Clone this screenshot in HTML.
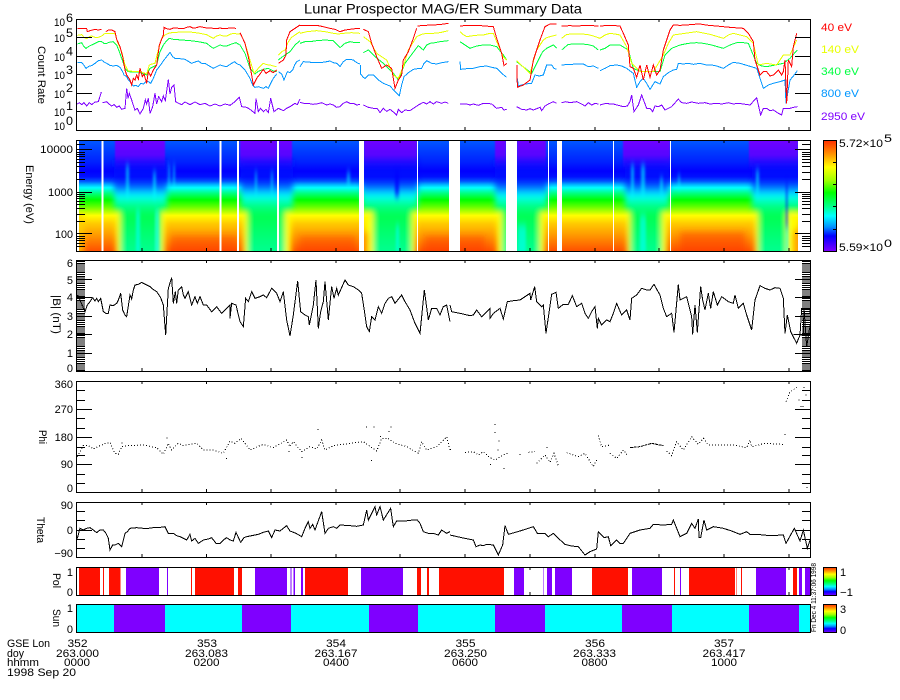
<!DOCTYPE html>
<html>
<head>
<meta charset="utf-8">
<style>
html,body{margin:0;padding:0;background:#fff;}
svg{display:block;}
text{font-family:"Liberation Sans",sans-serif;font-size:11px;fill:#000;}
.l{fill:none;stroke-width:3;stroke-linejoin:miter;shape-rendering:crispEdges;}
.k{stroke:#000;}
.ax{fill:none;stroke:#000;stroke-width:1;shape-rendering:crispEdges;}
.r{stroke:#ff0000;}.y{stroke:#e8ff00;}.g{stroke:#00ff40;}.b{stroke:#0096ff;}.p{stroke:#7f00ff;}
</style>
</head>
<body>
<svg width="900" height="700" viewBox="0 0 900 700" xmlns="http://www.w3.org/2000/svg">
<defs>
<linearGradient id="day" gradientUnits="userSpaceOnUse" x1="0" y1="140" x2="0" y2="251">
<stop offset="0" stop-color="#0058ff"/><stop offset=".2" stop-color="#0020ff"/><stop offset=".28" stop-color="#0000ff"/><stop offset=".33" stop-color="#0010ff"/><stop offset=".37" stop-color="#0050ff"/><stop offset=".4" stop-color="#00b0ff"/><stop offset=".43" stop-color="#00ffff"/><stop offset=".48" stop-color="#00ff80"/><stop offset=".54" stop-color="#00ff00"/><stop offset=".6" stop-color="#60ff00"/><stop offset=".65" stop-color="#c0ff00"/><stop offset=".68" stop-color="#ffff00"/><stop offset=".75" stop-color="#ffcc00"/><stop offset=".85" stop-color="#ff9c00"/><stop offset="1" stop-color="#ff5000"/>
</linearGradient>
<linearGradient id="wake" gradientUnits="userSpaceOnUse" x1="0" y1="140" x2="0" y2="251">
<stop offset="0" stop-color="#0030ff"/><stop offset=".25" stop-color="#0010ff"/><stop offset=".32" stop-color="#0000ff"/><stop offset=".38" stop-color="#0020ff"/><stop offset=".45" stop-color="#0090ff"/><stop offset=".5" stop-color="#00ffff"/><stop offset=".58" stop-color="#00ff90"/><stop offset=".68" stop-color="#00ff50"/><stop offset="1" stop-color="#00ff90"/>
</linearGradient>
<linearGradient id="pt" gradientUnits="userSpaceOnUse" x1="0" y1="140" x2="0" y2="174">
<stop offset="0" stop-color="#7000ff"/><stop offset=".45" stop-color="#6000ff" stop-opacity=".9"/><stop offset="1" stop-color="#0000ff" stop-opacity="0"/>
</linearGradient>
<filter id="bl" filterUnits="userSpaceOnUse" x="0" y="100" width="900" height="200"><feGaussianBlur stdDeviation="3 3.5"/></filter>
<filter id="bs" filterUnits="userSpaceOnUse" x="0" y="100" width="900" height="200"><feGaussianBlur stdDeviation="1.2 4"/></filter>
<filter id="bp" filterUnits="userSpaceOnUse" x="0" y="100" width="900" height="200"><feGaussianBlur stdDeviation=".7 0"/></filter>
<linearGradient id="cb" x1="0" y1="0" x2="0" y2="1">
<stop offset="0" stop-color="#ff3000"/><stop offset=".12" stop-color="#ff9000"/><stop offset=".24" stop-color="#ffff00"/><stop offset=".36" stop-color="#a0ff00"/><stop offset=".47" stop-color="#00ff00"/><stop offset=".6" stop-color="#00ff90"/><stop offset=".68" stop-color="#00ffff"/><stop offset=".78" stop-color="#0090ff"/><stop offset=".86" stop-color="#0000ff"/><stop offset="1" stop-color="#7f00ff"/>
</linearGradient>
<path id="xt" d="M142,0v3M206.5,0v3M271,0v3M336,0v3M400,0v3M465,0v3M530,0v3M595,0v3M659,0v3M724,0v3M789,0v3" class="ax"/>
<path id="xb" d="M142,0v-3M206.5,0v-3M271,0v-3M336,0v-3M400,0v-3M465,0v-3M530,0v-3M595,0v-3M659,0v-3M724,0v-3M789,0v-3" class="ax"/>
</defs>

<!-- title -->
<text x="304" y="13.5" textLength="278" lengthAdjust="spacingAndGlyphs" style="font-size:14px">Lunar Prospector MAG/ER Summary Data</text>

<!-- PANEL 1 lines -->
<g transform="scale(.33333)">
<polyline class="l p" points="232,312 238,308 245,314 252,308 260,318 268,308 275,314 285,306 295,305 304,276"/>
<polyline class="l p" points="308,308 320,305 327,312 335,318 342,314 350,322 358,318 365,328 375,325 380,265 384,295 388,280 395,300 400,316 405,330 412,325 420,342 430,325 436,300 440,312 445,295 450,340 458,320 465,280 470,312 476,290 485,305 490,288 496,302 505,238 510,282 515,262 522,255 527,305 536,310 545,314 555,306 570,314 585,306 600,314 615,310 630,318 645,312 660,318 675,312 690,316 705,305 718,292 725,320 740,322 750,328 765,340 768,295 775,335 782,325 790,335 798,328 805,338 812,295 822,335 835,325 850,332 860,325 870,320 885,310 892,314 900,297"/>
<polyline class="l b" points="232,188 245,188 252,196 258,205 268,198 275,197 285,190 295,182 305,180 312,186 320,190 330,196 340,198 350,196 360,202 368,215 372,225 380,230 385,240 390,245 400,258 408,256 415,260 422,250 430,252 438,244 445,245 452,250 460,235 470,210 478,200 485,190 492,180 500,170 510,157 518,170 525,175 540,176 555,178 565,184 575,190 585,186 595,183 605,190 615,190 628,198 640,205 650,200 660,195 670,198 680,200 692,192 703,185 712,192 720,195 735,210 750,235 758,255 765,262 775,260 790,265 798,260 805,265 812,250 820,235 830,222"/>
<polyline class="l b" points="835,215 845,222 852,240 862,215 870,218 878,210 884,195 890,185 900,180"/>
<polyline class="l g" points="232,132 245,128 252,140 258,145 268,138 275,135 285,130 295,125 305,125 312,130 320,130 330,126 340,125 350,135 358,155 365,175 375,205 385,215 400,216 420,217 430,222 440,225 450,205 460,200 470,195 480,155 490,135 500,122 508,115 520,118 530,118 540,120 560,121 580,123 600,126 620,130 630,138 640,145 650,140 660,135 670,138 680,138 695,132 708,128 720,135 735,160 750,205 765,222 775,214 785,210 795,207 805,205 818,212 830,215"/>
<polyline class="l g" points="835,180 845,172 855,165 870,155 885,135 900,122"/>
<polyline class="l y" points="232,106 245,104 252,112 260,116 268,110 275,108 285,112 295,112 305,108 315,100 330,100 345,100 352,125 365,155 375,195 385,213 400,214 420,215 430,218 440,222 448,195 456,192 465,190 475,150 485,115 495,105 505,100 515,98 530,97 540,96 560,96 580,97 600,100 620,104 630,110 640,115 650,108 660,105 670,108 680,108 690,103 700,100 712,102 722,102 735,130 750,180 762,220 775,205 782,198 790,190 800,194 810,195 820,198 830,200"/>
<polyline class="l y" points="835,165 845,155 855,150 865,125 875,112 885,105 900,95"/>
<polyline class="l r" points="232,86 245,86 260,86 262,95 270,92 285,88 295,90 305,88"/>
<polyline class="l r" points="318,95 325,90 335,90 345,95 350,118 360,140 368,170 375,210 380,225 385,232 390,240 395,255 400,235 405,240 410,225 415,238 420,205 427,230 432,222 440,250 445,215 452,228 460,210 470,195 478,135 490,105 492,82 500,86 510,88 520,84 530,84 540,86 550,86 560,82 570,80 578,84 585,84 600,80 610,82 620,84 630,84 640,85 650,86 660,84 670,86 680,85 695,84 708,85"/>
<polyline class="l r" points="720,98 735,130 745,170 755,225 760,255 770,235 780,222 790,208 798,220 810,212 820,218 830,210"/>
<polyline class="l r" points="835,190 850,180 858,165 860,120 870,95 885,85 900,75"/>
</g>
<g transform="translate(300,0) scale(.33333)">
<polyline class="l p" points="0,307 12,310 25,310 38,313 50,312 65,308 80,315 90,312 100,315 110,322 120,320 130,310 140,305 150,310 160,310 170,315 180,313"/>
<polyline class="l p" points="190,315 205,322 220,325 232,326 240,338 250,325 260,334 270,328 280,336 290,345 295,328 305,338 315,330 330,332 340,325 355,315 370,307 380,312 390,305 400,312 410,305 425,310 435,306 445,310"/>
<polyline class="l p" points="480,312 500,312 510,315 520,312 535,316 550,310 560,310 575,312 590,325 605,322 612,330 620,328"/>
<polyline class="l p" points="650,320 665,328 680,330 690,326 700,330 720,322 725,332 735,318 745,312 760,305 770,310"/>
<polyline class="l p" points="785,308 797,305 810,308 830,305 845,312 855,318 865,308 875,315 885,310 895,312"/>
<polyline class="l b" points="0,200 10,185 25,186 40,188 60,188 75,186 90,183 100,188 110,190 120,200 130,185 140,178 150,178 160,180 170,188 180,192"/>
<polyline class="l b" points="181,195 182,222 190,232 195,235 205,225 220,225 235,240 250,250 270,258 285,275 298,287 305,255 312,230 325,218 340,208 352,206 365,205 372,190 380,182 395,190 410,192 425,188 445,185"/>
<polyline class="l b" points="480,185 482,208 500,206 520,205 540,200 560,198 575,202 590,205 605,220 620,232"/>
<polyline class="l b" points="652,235 655,258 675,252 695,250 705,225 718,228 730,225 740,195 755,195 762,205 770,208"/>
<polyline class="l b" points="785,195 810,193 850,192 865,200 880,198 895,205"/>
<polyline class="l g" points="0,130 15,125 30,125 50,122 75,120 100,122 110,132 120,143 135,130 150,125 165,128 180,128"/>
<polyline class="l g" points="190,158 205,150 225,170 250,190 280,220 295,240 315,190 345,150 355,137 370,150 380,135 390,130 405,128 420,125 445,122"/>
<polyline class="l g" points="480,125 495,135 510,145 530,138 550,135 570,135 590,140 610,165 620,180"/>
<polyline class="l g" points="650,185 695,220 715,180 728,155 740,145 750,140 760,135 770,145"/>
<polyline class="l g" points="785,150 805,133 830,132 860,133 880,138 895,150"/>
<polyline class="l y" points="0,100 20,95 50,92 75,95 100,100 115,102 130,100 155,98 180,100"/>
<polyline class="l y" points="190,110 210,125 230,160 260,180 280,225 295,235 310,200 325,150 350,110 365,103 380,100 400,100 420,98 445,92"/>
<polyline class="l y" points="480,95 490,104 500,110 525,106 550,105 570,100 580,100 590,125 610,170 620,180"/>
<polyline class="l y" points="650,182 690,220 710,150 730,120 740,113 750,110 770,105"/>
<polyline class="l y" points="785,115 800,103 830,102 860,103 880,108 900,115"/>
<polyline class="l r" points="0,77 25,76 50,76 70,80 90,85 105,88 120,95 135,90 150,88 165,86 180,85"/>
<polyline class="l r" points="190,88 205,95 215,130 230,170 245,205 260,195 275,205 285,265 295,240 305,225 310,180 325,155 340,115 350,85"/>
<polyline class="l r" points="352,78 375,76 400,75 425,73 445,70"/>
<polyline class="l r" points="480,78 505,76 530,76 555,78 580,80 590,115 605,160 612,197 620,190"/>
<polyline class="l r" points="651,195 652,262 670,255 690,240 700,180 720,120 735,80 750,72 770,72"/>
<polyline class="l r" points="785,78 810,77 830,78 860,76 895,78"/>
</g>
<g transform="translate(600,0) scale(.33333)">
<polyline class="l p" points="0,315 10,312 20,310 30,312 40,312 55,316 70,320 82,318 90,305 95,285 102,335 115,315 125,285 140,325 150,325 158,335 165,318 175,320 185,315 195,330 215,320 235,297 245,308 260,310 275,306 295,310 315,308 330,312 350,310 365,312 385,308 400,312 415,310 430,312 450,315 470,293 482,345 490,325 500,325 510,332 520,330 535,340 545,345 550,325 570,325 580,322 592,320"/>
<polyline class="l b" points="0,212 15,205 30,197 50,195 65,198 80,205 100,220 110,262 120,245 130,235 140,250 150,268 165,245 180,252 190,230 205,218 220,210 230,208 235,190 250,192 265,190 280,193 300,190 320,195 335,195 350,198 370,205 385,195 400,187 420,190 440,196 470,205 490,265 505,255 520,250 540,245 555,240 558,310 570,240 580,228 592,212"/>
<polyline class="l g" points="0,150 15,145 30,135 45,135 60,135 85,150 100,205 115,212 130,215 155,215 180,215 195,165 215,145 240,135 265,130 290,128 310,130 335,135 370,145 390,135 410,128 430,128 445,130 470,190 485,198 500,200 525,195 550,190 570,175 592,150"/>
<polyline class="l y" points="0,115 15,105 30,100 45,102 60,105 80,140 95,190 120,215 140,214 160,215 190,165 205,130 220,105 255,100 290,95 330,103 370,115 385,105 400,100 420,105 440,110 460,130 475,195 500,190 530,195 550,165 570,165 590,120"/>
<polyline class="l r" points="0,78 30,76 60,78 70,100 85,135 90,200 100,205 110,232 120,195 130,240 140,195 150,232 160,195 170,225 180,210 190,150 210,90 220,75 240,76 260,75 280,73 300,72 325,76 350,78 390,82 430,85 445,100 460,125 465,180 480,225 490,215 500,215 510,228 520,225 535,210 545,225 550,215 555,180 560,310 565,180 575,200 580,140 590,100"/>
</g>

<!-- PANEL 2 spectrogram -->
<svg x="79" y="140" width="719" height="111" viewBox="79 140 719 111">
<rect x="79" y="140" width="719" height="112" fill="url(#day)"/>
<g filter="url(#bl)">
<!-- left yellow edge and redder day -->
<rect x="70" y="214" width="14" height="42" fill="#ffd400" opacity=".7"/>
<rect x="172" y="236" width="65" height="22" fill="#ff3000" opacity=".35"/>
<rect x="300" y="236" width="55" height="22" fill="#ff3000" opacity=".35"/>
<rect x="425" y="236" width="60" height="22" fill="#ff3000" opacity=".4"/>
<rect x="680" y="232" width="65" height="26" fill="#ff3000" opacity=".45"/>
<!-- outer wake (blue/cyan shift) -->
<rect x="114" y="160" width="53" height="50" fill="url(#wake)"/>
<rect x="241" y="160" width="52" height="50" fill="url(#wake)"/>
<rect x="362" y="160" width="56" height="50" fill="url(#wake)"/>
<rect x="495" y="160" width="52" height="50" fill="url(#wake)"/>
<rect x="625" y="160" width="44" height="50" fill="url(#wake)"/>
<rect x="752" y="160" width="50" height="50" fill="url(#wake)"/>
<!-- yellow wings -->
<rect x="116" y="214" width="49" height="44" fill="#ffff00"/>
<rect x="243" y="214" width="48" height="44" fill="#ffff00"/>
<rect x="364" y="214" width="52" height="44" fill="#ffff00"/>
<rect x="497" y="214" width="48" height="44" fill="#ffff00"/>
<rect x="627" y="214" width="40" height="44" fill="#ffff00"/>
<rect x="755" y="214" width="43" height="44" fill="#ffff00"/>
<rect x="362" y="232" width="6" height="26" fill="#ff9000"/>
<rect x="793" y="230" width="10" height="28" fill="#ffa000"/>
<!-- green interior -->
<rect x="120" y="180" width="41" height="78" fill="url(#wake)"/>
<rect x="247" y="180" width="38" height="78" fill="url(#wake)"/>
<rect x="373" y="180" width="39" height="78" fill="url(#wake)"/>
<rect x="502" y="180" width="38" height="78" fill="url(#wake)"/>
<rect x="630" y="180" width="32" height="78" fill="url(#wake)"/>
<rect x="758" y="180" width="29" height="78" fill="url(#wake)"/>
</g>
<!-- purple tops -->
<g filter="url(#bp)">
<rect x="115" y="136" width="50" height="38" fill="url(#pt)"/>
<rect x="240" y="136" width="37" height="38" fill="url(#pt)"/>
<rect x="279" y="136" width="13" height="38" fill="url(#pt)"/>
<rect x="364" y="136" width="53" height="38" fill="url(#pt)"/>
<rect x="495" y="136" width="11" height="38" fill="url(#pt)"/>
<rect x="517" y="136" width="29" height="38" fill="url(#pt)"/>
<rect x="623" y="136" width="47" height="38" fill="url(#pt)"/>
<rect x="749" y="136" width="49" height="38" fill="url(#pt)"/>
</g>
<!-- streaks -->
<g filter="url(#bs)" fill="#00ffff" opacity=".6">
<rect x="126" y="165" width="3" height="32"/>
<rect x="136" y="210" width="4" height="45"/>
<rect x="153" y="172" width="3" height="26"/>
<rect x="155" y="210" width="4" height="45"/>
<rect x="168" y="165" width="2" height="25"/>
<rect x="173" y="165" width="2" height="22"/>
<rect x="255" y="172" width="2" height="22"/>
<rect x="271" y="172" width="2" height="22"/>
<rect x="347" y="172" width="3" height="14"/>
<rect x="396" y="225" width="3" height="30"/>
<rect x="518" y="225" width="8" height="30"/>
<rect x="631" y="165" width="3" height="30"/>
<rect x="641" y="165" width="4" height="30"/>
<rect x="640" y="215" width="6" height="40"/>
<rect x="660" y="178" width="3" height="16"/>
<rect x="678" y="175" width="2" height="14"/>
<rect x="756" y="170" width="3" height="25"/>
<rect x="786" y="225" width="2" height="30"/>
</g>
<g filter="url(#bs)" fill="#0000ff" opacity=".8">
<rect x="395" y="172" width="4" height="24"/>
<rect x="786" y="182" width="1.5" height="45"/>
</g>
<!-- data gaps -->
<g fill="#fff">
<rect x="101.5" y="140" width="2" height="112"/>
<rect x="219.5" y="140" width="2" height="112"/>
<rect x="237" y="140" width="2" height="112"/>
<rect x="277" y="140" width="2" height="112"/>
<rect x="359" y="140" width="5" height="112"/>
<rect x="417" y="140" width="1" height="112"/>
<rect x="449" y="140" width="11" height="112"/>
<rect x="506" y="140" width="11" height="112"/>
<rect x="548" y="140" width="1" height="112"/>
<rect x="557" y="140" width="5" height="112"/>
<rect x="613" y="140" width="1" height="112"/>
<rect x="670" y="140" width="1" height="112"/>
</g>
</svg>

<!-- panel frames -->
<rect class="ax" x="76.5" y="19.5" width="734" height="111"/>
<rect class="ax" x="76.5" y="140.5" width="734" height="111"/>
<rect class="ax" x="76.5" y="260.5" width="734" height="111"/>
<rect class="ax" x="76.5" y="381.5" width="734" height="111"/>
<rect class="ax" x="76.5" y="502.5" width="734" height="55"/>
<rect class="ax" x="76.5" y="567.5" width="734" height="28"/>
<rect class="ax" x="76.5" y="604.5" width="734" height="28"/>

<!-- x ticks -->
<use href="#xt" y="19"/><use href="#xb" y="130"/>
<use href="#xt" y="140"/><use href="#xb" y="251"/>
<use href="#xt" y="260"/><use href="#xb" y="371"/>
<use href="#xt" y="381"/><use href="#xb" y="492"/>
<use href="#xt" y="502"/><use href="#xb" y="557"/>
<use href="#xt" y="567"/><use href="#xb" y="595"/>
<use href="#xt" y="604"/><use href="#xb" y="632"/>

<!-- y ticks: panel 1 -->
<path class="ax" d="M77,37.5h15M77,56.5h15M77,74.5h15M77,93.5h15M77,111.5h15M795,37.5h15M795,56.5h15M795,74.5h15M795,93.5h15M795,111.5h15"/>
<!-- panel 2 -->
<path class="ax" d="M77,149.5h15M77,192.5h15M77,233.5h15M795,149.5h15M795,192.5h15M795,233.5h15"/>
<path class="ax" d="M77,179.5h8M77,172.5h8M77,166.5h8M77,162.5h8M77,159.5h8M77,156.5h8M77,154.5h8M77,152.5h8M77,221.5h8M77,214.5h8M77,208.5h8M77,204.5h8M77,201.5h8M77,198.5h8M77,196.5h8M77,194.5h8M77,246.5h8M77,243.5h8M77,240.5h8M77,238.5h8M77,236.5h8M77,144.5h8M802,179.5h8M802,172.5h8M802,166.5h8M802,162.5h8M802,159.5h8M802,156.5h8M802,154.5h8M802,152.5h8M802,221.5h8M802,214.5h8M802,208.5h8M802,204.5h8M802,201.5h8M802,198.5h8M802,196.5h8M802,194.5h8M802,246.5h8M802,243.5h8M802,240.5h8M802,238.5h8M802,236.5h8M802,144.5h8"/>
<!-- panel 3 comb -->
<path d="M81,261V371" stroke="#000" stroke-width="8" stroke-dasharray="1 .85" fill="none" shape-rendering="crispEdges"/>
<path d="M806,261V371" stroke="#000" stroke-width="8" stroke-dasharray="1 .85" fill="none" shape-rendering="crispEdges"/>
<path class="ax" d="M77,279.5h15M77,297.5h15M77,316.5h15M77,334.5h15M77,353.5h15M795,279.5h15M795,297.5h15M795,316.5h15M795,334.5h15M795,353.5h15"/>
<!-- panel 4 -->
<path class="ax" d="M77,409.5h15M77,437.5h15M77,464.5h15M795,409.5h15M795,437.5h15M795,464.5h15M77,390.5h8M77,400.5h8M77,418.5h8M77,428.5h8M77,447.5h8M77,455.5h8M77,474.5h8M77,483.5h8M802,390.5h8M802,400.5h8M802,418.5h8M802,428.5h8M802,447.5h8M802,455.5h8M802,474.5h8M802,483.5h8"/>
<!-- panel 5 -->
<path class="ax" d="M77,530.5h15M795,530.5h15M77,511.5h8M77,520.5h8M77,539.5h8M77,548.5h8M802,511.5h8M802,520.5h8M802,539.5h8M802,548.5h8"/>

<!-- PANEL 3 line -->
<g transform="translate(0,255) scale(.33333)">
<polyline class="l k" points="232,120 240,135 255,170 262,150 270,140 278,128 285,138 290,130 295,140 302,130 310,170 318,175 325,175 330,150 340,152 350,145 355,135 362,115 368,165 375,180 380,185 390,120 395,132 400,105 405,90 415,88 425,82 430,85 440,90 450,95 458,102 470,110 482,128 490,150 497,240 505,100 515,68 520,145 526,110 530,145 535,105 545,95 550,120 555,130 565,110 575,150 585,125 592,145 600,125 610,150 620,150 635,170 650,155 665,175 680,160 690,150 690,190 695,145 708,150 720,200 730,215 737,130 745,140 755,110 765,130 780,125 790,120 800,128 815,100 830,115 840,140 850,110 860,195 870,243 880,180 893,78 902,170 915,180 925,185 928,210 940,150 948,75 955,220 962,170 970,140 975,80 985,195 995,95 1002,130 1010,100 1015,120 1035,75 1045,90 1060,95 1075,105 1085,115 1095,180 1100,215 1108,230 1115,185 1125,195 1135,155 1145,175 1155,145 1165,130 1175,125 1185,145 1205,120 1215,140 1230,165 1245,205 1260,235 1273,105 1285,195 1295,160 1310,160 1320,180 1330,155 1340,150 1345,175 1350,200"/>
</g>
<g transform="translate(450,255) scale(.33333)">
<polyline class="l k" points="0,150 5,170 30,175 60,182 70,180 80,165 95,185 105,175 120,160 120,190 130,175 150,160 160,192 165,170 172,140 190,137 210,135 240,115 242,135 254,95 260,140 275,155 280,150 288,235 305,118 318,112 325,160 340,148 355,148 367,122 380,155 395,145 405,175 415,190 425,170 435,155 442,220 445,190 455,210 470,195 480,200 490,175 500,145 515,180 530,165 540,195 545,130 560,120 575,100 590,105 600,105 612,88 630,120 640,160 650,185 665,175 672,232 685,88 690,135 700,130 710,125 725,185 728,238 735,150 742,232 752,95 758,135 765,165 775,115 782,160 790,110 802,150 815,125 835,140 850,145 855,120 865,160 880,145 890,180 905,225 915,135 930,92 945,100 960,105 975,98 990,100 1000,130 1005,235 1012,180 1022,230 1040,265 1050,240 1055,160 1080,160 1082,200 1070,275 1062,160 1060,240 1030,238"/>
</g>

<!-- PANEL 4 dotted -->
<g transform="translate(0,375) scale(.33333)">
<polyline class="l k" stroke-dasharray="3 6" points="232,245 250,212 265,212 280,222 300,212 315,206 330,202 345,235 355,238 365,215 385,212 430,210 470,218 490,238 505,205 515,225 535,205 550,212 590,205 610,225 640,225 670,235 690,198 705,205 723,190 750,225 790,208 820,218 860,195 870,215 880,200 905,230 930,215 950,222 965,195 975,225 1000,212 1050,205 1090,200 1130,228 1145,190 1165,190 1185,205 1220,215 1255,235 1265,200 1280,225 1310,215 1340,185 1350,225"/>
<path class="l k" d="M365,204h3M500,189h3M678,250h3M866,230h3M905,247h3M952,163h3M1098,156h3M1120,156h3M1113,256h3M1172,156h3M1165,170h3M1140,185h3"/>
</g>
<g transform="translate(450,375) scale(.33333)">
<g class="l k" stroke-dasharray="3 6">
<polyline points="45,232 70,230 85,240 100,230 120,248 135,255 160,240 172,235"/>
<polyline points="235,232 255,230"/>
<polyline points="260,265 285,240 300,262 312,235 325,272"/>
<polyline points="350,233 385,245 405,235 430,275 440,255"/>
<polyline points="445,182 455,215 480,210"/>
<polyline points="480,235 500,250 520,225 535,245"/>
<polyline points="650,228 665,242 680,200 700,225 725,185 745,208 760,190 775,210 850,210 890,218 900,195 905,215 945,205 1000,208"/>
<polyline points="1008,80 1020,50 1045,35"/>
</g>
<polyline class="l k" stroke-dasharray="9 2" points="540,218 570,215 605,205 640,212"/>
<path class="l k" d="M208,238h3M0,223h3M1070,337h3M134,148h3M134,172h3M145,198h3M142,225h3M160,280h3M120,268h3M290,217h3M1003,178h3M1045,75h3M1060,37h3M1052,95h3M1058,95h3M1066,60h3"/>
</g>

<!-- PANEL 5 line -->
<g transform="translate(0,495) scale(.33333)">
<polyline class="l k" points="232,130 240,100 250,105 260,100 270,98 280,105 290,113 300,105 310,105 318,115 325,130 330,165 338,150 345,150 355,145 365,155 375,115 382,110 390,100 410,98 430,100 445,100 460,98 475,98 495,95 505,115 520,115 530,122 540,125 550,130 560,135 570,118 575,138 585,130 595,145 610,135 625,132 635,128 648,145 660,145 670,135 680,128 690,135 700,138 708,112 722,142 732,128 740,125 755,122 775,118 790,112 805,108 815,128 825,105 840,108 860,92 870,108 888,115 905,125 915,100 925,80 930,100 938,88 945,105 965,50 975,115 985,100 1000,95 1010,100 1020,90 1050,92 1070,94 1090,90 1100,45 1105,75 1125,35 1130,60 1140,35 1150,75 1172,40 1180,95 1190,78 1215,78 1240,75 1252,75 1260,85 1270,110 1285,115 1300,115 1315,120 1325,105 1340,115 1350,110"/>
</g>
<g transform="translate(450,495) scale(.33333)">
<polyline class="l k" points="0,120 35,128 70,135 78,155 90,150 100,152 110,148 130,150 145,180 158,150 165,92 175,118 210,108 250,95 262,115 285,115 295,125 310,115 325,130 345,148 365,153 385,155 405,180 420,170 440,162 445,110 462,128 475,125 482,152 500,135 510,145 520,145 540,115 570,105 600,100 610,88 640,90 665,88 670,75 690,125 710,115 725,85 735,100 745,72 747,128 752,128 762,75 770,105 790,95 820,100 845,108 870,118 890,110 900,118 920,118 960,122 1000,120 1008,145 1033,100 1050,138 1060,105 1072,160 1082,130"/>
</g>

<!-- POL -->
<svg x="77" y="568" width="733" height="27" viewBox="77 568 733 27">
<g transform="scale(.33333,1)" shape-rendering="crispEdges">
<g fill="#ff1000"><rect x="237" y="560" width="63" height="40"/><rect x="309" y="560" width="3" height="40"/><rect x="327" y="560" width="35" height="40"/><rect x="573" y="560" width="3" height="40"/><rect x="585" y="560" width="117" height="40"/><rect x="714" y="560" width="12" height="40"/><rect x="915" y="560" width="129" height="40"/><rect x="1251" y="560" width="12" height="40"/><rect x="1281" y="560" width="6" height="40"/><rect x="1317" y="560" width="33" height="40"/></g>
<g fill="#7f00ff"><rect x="378" y="560" width="99" height="40"/><rect x="501" y="560" width="3" height="40"/><rect x="765" y="560" width="96" height="40"/><rect x="871" y="560" width="4" height="40"/><rect x="880" y="560" width="5" height="40"/><rect x="903" y="560" width="6" height="40"/><rect x="1083" y="560" width="126" height="40"/></g>
</g>
<g transform="translate(450,0) scale(.33333,1)" shape-rendering="crispEdges">
<g fill="#ff1000"><rect x="0" y="560" width="162" height="40"/><rect x="426" y="560" width="108" height="40"/><rect x="672" y="560" width="3" height="40"/><rect x="717" y="560" width="138" height="40"/><rect x="859" y="560" width="2" height="40"/><rect x="873" y="560" width="3" height="40"/><rect x="1029" y="560" width="12" height="40"/></g>
<g fill="#7f00ff"><rect x="192" y="560" width="30" height="40"/><rect x="280" y="560" width="2" height="40"/><rect x="291" y="560" width="15" height="40"/><rect x="315" y="560" width="51" height="40"/><rect x="546" y="560" width="90" height="40"/><rect x="690" y="560" width="3" height="40"/><rect x="918" y="560" width="90" height="40"/><rect x="1047" y="560" width="9" height="40"/><rect x="1065" y="560" width="15" height="40"/></g>
</g>
</svg>

<!-- SUN -->
<svg x="77" y="605" width="733" height="27" viewBox="77 605 733 27">
<rect x="77" y="605" width="733" height="27" fill="#00ffff"/>
<g transform="scale(.33333,1)" fill="#7f00ff" shape-rendering="crispEdges">
<rect x="342" y="600" width="153" height="40"/><rect x="726" y="600" width="147" height="40"/><rect x="1107" y="600" width="147" height="40"/>
</g>
<g transform="translate(450,0) scale(.33333,1)" fill="#7f00ff" shape-rendering="crispEdges">
<rect x="135" y="600" width="150" height="40"/><rect x="516" y="600" width="150" height="40"/><rect x="897" y="600" width="150" height="40"/>
</g>
</svg>
<path class="ax" d="M76.5,567.5v28M76.5,604.5v28M810.5,567.5v28M810.5,604.5v28M76.5,567.5h734M76.5,595.5h734M76.5,604.5h734M76.5,632.5h734"/>

<!-- y labels panel 1 -->
<g>
<text x="54" y="26" textLength="11" lengthAdjust="spacingAndGlyphs">10</text><text x="66" y="22" textLength="7" lengthAdjust="spacingAndGlyphs" style="font-size:12px">6</text>
<text x="54" y="42" textLength="11" lengthAdjust="spacingAndGlyphs">10</text><text x="66" y="37" textLength="7" lengthAdjust="spacingAndGlyphs" style="font-size:12px">5</text>
<text x="54" y="61" textLength="11" lengthAdjust="spacingAndGlyphs">10</text><text x="66" y="55.5" textLength="7" lengthAdjust="spacingAndGlyphs" style="font-size:12px">4</text>
<text x="54" y="79" textLength="11" lengthAdjust="spacingAndGlyphs">10</text><text x="66" y="74" textLength="7" lengthAdjust="spacingAndGlyphs" style="font-size:12px">3</text>
<text x="54" y="98" textLength="11" lengthAdjust="spacingAndGlyphs">10</text><text x="66" y="92" textLength="7" lengthAdjust="spacingAndGlyphs" style="font-size:12px">2</text>
<text x="54" y="116" textLength="11" lengthAdjust="spacingAndGlyphs">10</text><text x="66" y="110" textLength="7" lengthAdjust="spacingAndGlyphs" style="font-size:12px">1</text>
<text x="54" y="130" textLength="11" lengthAdjust="spacingAndGlyphs">10</text><text x="66" y="125" textLength="7" lengthAdjust="spacingAndGlyphs" style="font-size:12px">0</text>
</g>
<text transform="translate(38,46) rotate(90)" textLength="58" lengthAdjust="spacingAndGlyphs">Count Rate</text>
<text transform="translate(26,165) rotate(90)" textLength="59" lengthAdjust="spacingAndGlyphs">Energy (eV)</text>
<text transform="translate(53,295) rotate(90)" textLength="39" lengthAdjust="spacingAndGlyphs">|B| (nT)</text>
<text transform="translate(39,430) rotate(90)" textLength="14" lengthAdjust="spacingAndGlyphs">Phi</text>
<text transform="translate(37,517) rotate(90)" textLength="26" lengthAdjust="spacingAndGlyphs">Theta</text>
<text transform="translate(53,573) rotate(90)" textLength="15" lengthAdjust="spacingAndGlyphs">Pol</text>
<text transform="translate(53,609) rotate(90)" textLength="18" lengthAdjust="spacingAndGlyphs">Sun</text>

<!-- legend -->
<text x="821" y="31" textLength="31" lengthAdjust="spacingAndGlyphs" style="fill:#ff0000">40 eV</text>
<text x="821" y="53" textLength="38" lengthAdjust="spacingAndGlyphs" style="fill:#e8ff00">140 eV</text>
<text x="821" y="75" textLength="38" lengthAdjust="spacingAndGlyphs" style="fill:#00ff40">340 eV</text>
<text x="821" y="97" textLength="38" lengthAdjust="spacingAndGlyphs" style="fill:#0096ff">800 eV</text>
<text x="821" y="120" textLength="44" lengthAdjust="spacingAndGlyphs" style="fill:#7f00ff">2950 eV</text>

<!-- energy labels -->
<text x="40" y="153" textLength="33" lengthAdjust="spacingAndGlyphs">10000</text>
<text x="48" y="196" textLength="25" lengthAdjust="spacingAndGlyphs">1000</text>
<text x="55" y="238" textLength="18" lengthAdjust="spacingAndGlyphs">100</text>

<!-- colorbar -->
<rect x="823.5" y="140.5" width="13" height="111" fill="url(#cb)" stroke="#000" shape-rendering="crispEdges"/>
<path class="ax" d="M833,162.5h3M833,184.5h3M833,206.5h3M833,229.5h3"/>
<text x="839" y="147" textLength="44" lengthAdjust="spacingAndGlyphs">5.72×10</text><text x="884" y="142" textLength="8" lengthAdjust="spacingAndGlyphs">5</text>
<text x="839" y="251" textLength="44" lengthAdjust="spacingAndGlyphs">5.59×10</text><text x="884" y="247" textLength="8" lengthAdjust="spacingAndGlyphs">0</text>

<!-- labels -->
<g text-anchor="end">
<text x="73" y="267">6</text><text x="73" y="284">5</text><text x="73" y="301">4</text><text x="73" y="320">3</text><text x="73" y="338">2</text><text x="73" y="357">1</text><text x="73" y="372">0</text>
<text x="73" y="388">360</text><text x="73" y="413">270</text><text x="73" y="441">180</text><text x="73" y="468">90</text><text x="73" y="492">0</text>
<text x="73" y="509">90</text><text x="73" y="534">0</text><text x="73" y="557">−90</text>
<text x="73" y="576">1</text><text x="73" y="596">0</text>
<text x="73" y="612">1</text><text x="73" y="633">0</text>
</g>

<!-- small color bars -->
<rect x="823.5" y="567.5" width="13" height="28" fill="url(#cb)" stroke="#000" shape-rendering="crispEdges"/>
<rect x="823.5" y="604.5" width="13" height="28" fill="url(#cb)" stroke="#000" shape-rendering="crispEdges"/>
<text x="840" y="576">1</text><text x="840" y="596" textLength="13" lengthAdjust="spacingAndGlyphs">−1</text>
<text x="840" y="613">3</text><text x="840" y="634">0</text>

<!-- stamp -->
<text transform="translate(816,632) rotate(-90)" textLength="69" lengthAdjust="spacingAndGlyphs" style="font-size:7px">Fri Dec  4 11:37:06 1998</text>

<!-- bottom labels -->
<text x="7" y="647" textLength="43" lengthAdjust="spacingAndGlyphs">GSE Lon</text>
<text x="7" y="657" textLength="17" lengthAdjust="spacingAndGlyphs">doy</text>
<text x="7" y="666" textLength="32" lengthAdjust="spacingAndGlyphs">hhmm</text>
<text x="7" y="676" textLength="69" lengthAdjust="spacingAndGlyphs">1998 Sep 20</text>
<g>
<text x="67.5" y="647" textLength="20" lengthAdjust="spacingAndGlyphs">352</text><text x="56" y="657" textLength="43" lengthAdjust="spacingAndGlyphs">263.000</text><text x="64" y="666" textLength="26" lengthAdjust="spacingAndGlyphs">0000</text>
<text x="197" y="647" textLength="20" lengthAdjust="spacingAndGlyphs">353</text><text x="185" y="657" textLength="43" lengthAdjust="spacingAndGlyphs">263.083</text><text x="193.5" y="666" textLength="26" lengthAdjust="spacingAndGlyphs">0200</text>
<text x="326" y="647" textLength="20" lengthAdjust="spacingAndGlyphs">354</text><text x="314.5" y="657" textLength="43" lengthAdjust="spacingAndGlyphs">263.167</text><text x="323" y="666" textLength="26" lengthAdjust="spacingAndGlyphs">0400</text>
<text x="455.5" y="647" textLength="20" lengthAdjust="spacingAndGlyphs">355</text><text x="444" y="657" textLength="43" lengthAdjust="spacingAndGlyphs">263.250</text><text x="452" y="666" textLength="26" lengthAdjust="spacingAndGlyphs">0600</text>
<text x="585" y="647" textLength="20" lengthAdjust="spacingAndGlyphs">356</text><text x="573" y="657" textLength="43" lengthAdjust="spacingAndGlyphs">263.333</text><text x="581.5" y="666" textLength="26" lengthAdjust="spacingAndGlyphs">0800</text>
<text x="714" y="647" textLength="20" lengthAdjust="spacingAndGlyphs">357</text><text x="702.5" y="657" textLength="43" lengthAdjust="spacingAndGlyphs">263.417</text><text x="711" y="666" textLength="26" lengthAdjust="spacingAndGlyphs">1000</text>
</g>
</svg>
</body>
</html>
